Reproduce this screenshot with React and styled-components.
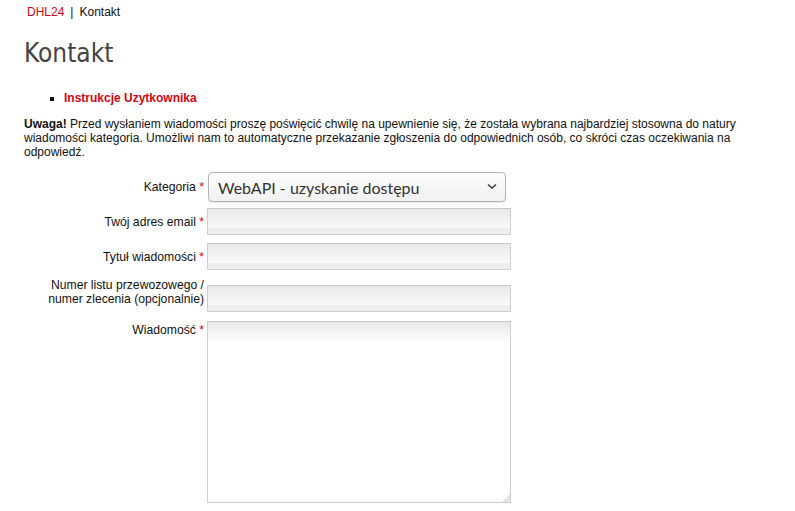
import React from 'react'
import styled, { createGlobalStyle } from 'styled-components'

const GlobalStyle = createGlobalStyle`
    html, body {
        margin: 0;
        padding: 0;
        background: #fff;
    }
    body {
        font-family: "Liberation Sans", Arial, sans-serif;
        font-size: 12px;
        color: #111;
    }
`

const Page = styled.div`
    padding: 0 24px;
    width: 747px;
`

const Breadcrumb = styled.div`
    padding: 5px 0 0 3px;
    height: 15px;
    line-height: 15px;
    a {
        color: #d40511;
        text-decoration: none;
    }
    .sep {
        margin: 0 6px;
    }
`

const Title = styled.h1`
    margin: 18px 0 0;
    font-family: "Liberation Sans Narrow", "DejaVu Sans Condensed", "Liberation Sans", sans-serif;
    font-stretch: condensed;
    font-weight: normal;
    font-size: 26px;
    line-height: 30px;
    color: #444;
`

const Links = styled.ul`
    margin: 23px 0 0;
    padding-left: 40px;
    list-style: square;
    li {
        line-height: 14px;
    }
    a {
        color: #d40511;
        font-weight: bold;
        text-decoration: none;
    }
`

const Note = styled.p`
    margin: 12px 0 0;
    line-height: 14px;
    b {
        font-weight: bold;
    }
`

const Form = styled.form`
    margin-top: 13px;
    display: flex;
    flex-direction: column;
`

const Row = styled.div`
    display: flex;
    align-items: ${p => p.$align || 'center'};
    margin-bottom: ${p => p.$gap || 0}px;
`

const Label = styled.label`
    width: 180px;
    flex-shrink: 0;
    text-align: right;
    padding-right: 3px;
    line-height: 14px;
    font-size: 12.2px;
    color: #111;
    padding-top: ${p => p.$top || 0}px;
    padding-bottom: ${p => p.$bottom || 0}px;
    span {
        color: #d40511;
    }
`

const SelectWrap = styled.div`
    position: relative;
    margin-left: 1px;
    width: 298px;
    height: 30px;
    svg {
        position: absolute;
        right: 9px;
        top: 11px;
        pointer-events: none;
    }
`

const Select = styled.select`
    appearance: none;
    box-sizing: border-box;
    width: 100%;
    height: 100%;
    border: 1px solid #b4b4b4;
    border-radius: 4px;
    background: linear-gradient(#fdfdfd, #f1f1f1);
    box-shadow: 0 1px 1px rgba(0, 0, 0, 0.08);
    font-family: "Lato", "Open Sans", sans-serif;
    font-size: 16px;
    color: #333;
    padding: 0 9px;
    outline: none;
`

const Input = styled.input`
    box-sizing: border-box;
    width: 304px;
    height: 27px;
    border: 1px solid #cfcfcf;
    border-top-color: #c6c6c6;
    background: linear-gradient(#e8e8e8, #fafafa 76%, #eeeeee 76%);
    font: 12px "Liberation Sans", Arial, sans-serif;
    padding: 0 4px;
    outline: none;
`

const TextArea = styled.textarea`
    box-sizing: border-box;
    width: 304px;
    height: 182px;
    border: 1px solid #cfcfcf;
    border-top-color: #c6c6c6;
    background: linear-gradient(#e8e8e8, #fff 22px);
    font: 12px "Liberation Sans", Arial, sans-serif;
    padding: 4px;
    outline: none;
    display: block;
    resize: none;
`

const AreaWrap = styled.div`
    position: relative;
    svg {
        position: absolute;
        right: 1px;
        bottom: 1px;
    }
`

function Req() {
    return <span>*</span>
}

export default function App() {
    return (
        <Page>
            <GlobalStyle />
            <Breadcrumb>
                <a href="#">DHL24</a>
                <span className="sep">|</span>
                Kontakt
            </Breadcrumb>
            <Title>Kontakt</Title>
            <Links>
                <li><a href="#">Instrukcje Uzytkownika</a></li>
            </Links>
            <Note>
                <b>Uwaga!</b> Przed wysłaniem wiadomości proszę poświęcić chwilę na upewnienie się, że została wybrana najbardziej stosowna do natury wiadomości kategoria. Umożliwi nam to automatyczne przekazanie zgłoszenia do odpowiednich osób, co skróci czas oczekiwania na odpowiedź.
            </Note>
            <Form>
                <Row $gap={6}>
                    <Label>Kategoria <Req /></Label>
                    <SelectWrap>
                        <Select defaultValue="webapi">
                            <option value="webapi">WebAPI - uzyskanie dostępu</option>
                        </Select>
                        <svg width="10" height="7" viewBox="0 0 10 7">
                            <path d="M1 1.5 L5 5.2 L9 1.5" fill="none" stroke="#444" strokeWidth="1.6" />
                        </svg>
                    </SelectWrap>
                </Row>
                <Row $gap={8}>
                    <Label>Twój adres email <Req /></Label>
                    <Input type="text" />
                </Row>
                <Row $gap={8}>
                    <Label>Tytuł wiadomości <Req /></Label>
                    <Input type="text" />
                </Row>
                <Row $gap={9} $align="flex-end">
                    <Label $bottom={6}>Numer listu przewozowego / numer zlecenia (opcjonalnie)</Label>
                    <Input type="text" />
                </Row>
                <Row $align="flex-start">
                    <Label $top={2}>Wiadomość <Req /></Label>
                    <AreaWrap>
                        <TextArea />
                        <svg width="8" height="8" viewBox="0 0 8 8">
                            <path d="M8 0 V8 H0 Z" fill="#e4e4e4" />
                        </svg>
                    </AreaWrap>
                </Row>
            </Form>
        </Page>
    )
}
